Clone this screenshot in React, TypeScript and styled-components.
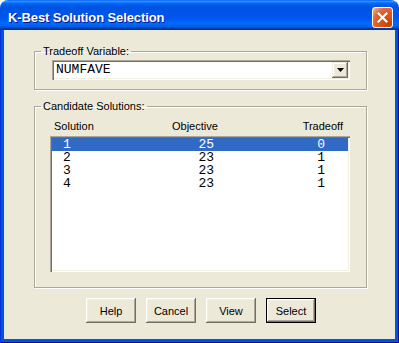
import React from 'react';
import styled, { createGlobalStyle } from 'styled-components';

const GlobalStyle = createGlobalStyle`
  html, body {
    margin: 0;
    padding: 0;
    background: #ffffff;
  }
  body {
    font-family: 'Liberation Sans', Arial, sans-serif;
    font-size: 11px;
  }
`;

const Window = styled.div`
  width: 399px;
  height: 343px;
  display: flex;
  flex-direction: column;
`;

const TitleBar = styled.div`
  height: 30px;
  box-sizing: border-box;
  padding: 5px 6px 0 8px;
  display: flex;
  align-items: center;
  justify-content: space-between;
  border-radius: 8px 8px 0 0;
  background: linear-gradient(
    180deg,
    #0058ee 0%,
    #3593ff 4%,
    #288eff 6%,
    #127dff 8%,
    #036ffc 10%,
    #0262ee 14%,
    #0057e5 20%,
    #0054e3 24%,
    #0055eb 56%,
    #005bf5 66%,
    #026afe 76%,
    #0062ef 86%,
    #0052d6 92%,
    #0040ab 94%,
    #003092 100%
  );
`;

const Title = styled.span`
  color: #ffffff;
  font-family: 'Liberation Sans', Arial, sans-serif;
  font-weight: bold;
  font-size: 13px;
  letter-spacing: -0.1px;
  text-shadow: 1px 1px 0 #0a1883;
`;

const CloseButton = styled.div`
  width: 21px;
  height: 21px;
  box-sizing: border-box;
  border: 1px solid #ffffff;
  border-radius: 3px;
  display: flex;
  align-items: center;
  justify-content: center;
  background: radial-gradient(
    circle at 85% 85%,
    #c94100 0%,
    #dc5a1f 50%,
    #e2693a 70%,
    #f0a17c 90%,
    #ffd6c0 100%
  );
`;

const Frame = styled.div`
  flex: 1;
  display: flex;
  padding: 0 4px 4px;
  background: #0054e3;
  box-shadow: inset 1px 0 #0831d9, inset -1px -1px #00138c;
`;

const Client = styled.div`
  flex: 1;
  background: #ece9d8;
  padding: 14px 28px 0 30px;
  display: flex;
  flex-direction: column;
`;

const Group = styled.fieldset<{ gapTop?: number }>`
  margin: ${p => p.gapTop ?? 0}px 0 0 0;
  padding: 0;
  min-width: 0;
  border: 1px solid #aca899;
  box-shadow: 1px 1px 0 #ffffff, inset 1px 1px 0 #ffffff;
`;

const Legend = styled.legend`
  margin-left: 6px;
  padding: 0 2px;
  line-height: 14px;
  font-size: 11px;
  color: #000000;
`;

const GroupBody = styled.div<{ pad: string }>`
  padding: ${p => p.pad};
`;

const Combo = styled.div`
  height: 20px;
  box-sizing: border-box;
  display: flex;
  background: #ffffff;
  box-shadow: inset 1px 1px #aca899, inset 2px 2px #716f64, inset -1px -1px #ffffff,
    inset -2px -2px #f1efe2;
  padding: 2px;
`;

const ComboText = styled.div`
  flex: 1;
  padding-left: 2px;
  font-family: 'Liberation Mono', 'Courier New', monospace;
  font-size: 13px;
  line-height: 16px;
  color: #000000;
`;

const ArrowButton = styled.div`
  width: 16px;
  height: 16px;
  box-sizing: border-box;
  background: #ece9d8;
  box-shadow: inset -1px -1px #716f64, inset 1px 1px #f1efe2, inset -2px -2px #aca899,
    inset 2px 2px #ffffff;
  display: flex;
  align-items: center;
  justify-content: center;
`;

const HeaderRow = styled.div`
  margin-top: 6px;
  display: grid;
  grid-template-columns: 118px 1fr auto;
  padding: 0 7px 0 4px;
  line-height: 14px;
  color: #000000;
`;

const ListBox = styled.div`
  margin-top: 3px;
  height: 136px;
  box-sizing: border-box;
  padding: 2px;
  background: #ffffff;
  box-shadow: inset 1px 1px #aca899, inset 2px 2px #716f64, inset -1px -1px #ffffff,
    inset -2px -2px #f1efe2;
`;

const Row = styled.div<{ selected?: boolean }>`
  display: grid;
  grid-template-columns: 96px 66px 111px;
  height: 13px;
  line-height: 13px;
  font-family: 'Liberation Mono', 'Courier New', monospace;
  font-size: 13px;
  color: ${p => (p.selected ? '#ffffff' : '#000000')};
  background: ${p => (p.selected ? '#316ac5' : 'transparent')};
`;

const Cell = styled.span<{ align: 'left' | 'right'; indent?: number }>`
  text-align: ${p => p.align};
  padding-left: ${p => p.indent ?? 0}px;
`;

const ButtonRow = styled.div`
  margin-top: 10px;
  display: flex;
  justify-content: center;
  gap: 10px;
  padding-left: 1px;
`;

const Button = styled.div<{ isDefault?: boolean }>`
  width: 50px;
  height: 25px;
  box-sizing: border-box;
  display: flex;
  align-items: center;
  justify-content: center;
  background: #ece9d8;
  color: #000000;
  font-size: 11px;
  border: ${p => (p.isDefault ? '1px solid #000000' : 'none')};
  box-shadow: inset -1px -1px #716f64, inset 1px 1px #ffffff, inset -2px -2px #aca899,
    inset 2px 2px #f1efe2;
`;

const rows = [
  { id: 1, objective: 25, tradeoff: 0 },
  { id: 2, objective: 23, tradeoff: 1 },
  { id: 3, objective: 23, tradeoff: 1 },
  { id: 4, objective: 23, tradeoff: 1 },
];

const App: React.FC = () => {
  return (
    <>
      <GlobalStyle />
      <Window>
        <TitleBar>
          <Title>K-Best Solution Selection</Title>
          <CloseButton>
            <svg width="11" height="11" viewBox="0 0 11 11">
              <path d="M1.5 1.5 L9.5 9.5 M9.5 1.5 L1.5 9.5" stroke="#ffffff" strokeWidth="2" strokeLinecap="square" />
            </svg>
          </CloseButton>
        </TitleBar>
        <Frame>
          <Client>
            <Group>
              <Legend>Tradeoff Variable:</Legend>
              <GroupBody pad="2px 16px 9px 17px">
                <Combo>
                  <ComboText>NUMFAVE</ComboText>
                  <ArrowButton>
                    <svg width="7" height="4" viewBox="0 0 7 4">
                      <path d="M0 0 H7 L3.5 4 Z" fill="#000000" />
                    </svg>
                  </ArrowButton>
                </Combo>
              </GroupBody>
            </Group>

            <Group gapTop={9}>
              <Legend>Candidate Solutions:</Legend>
              <GroupBody pad="0 16px 15px 15px">
                <HeaderRow>
                  <span>Solution</span>
                  <span>Objective</span>
                  <span>Tradeoff</span>
                </HeaderRow>
                <ListBox>
                  {rows.map(r => (
                    <Row key={r.id} selected={r.id === 1}>
                      <Cell align="left" indent={11}>
                        {r.id}
                      </Cell>
                      <Cell align="right">{r.objective}</Cell>
                      <Cell align="right">{r.tradeoff}</Cell>
                    </Row>
                  ))}
                </ListBox>
              </GroupBody>
            </Group>

            <ButtonRow>
              <Button>Help</Button>
              <Button>Cancel</Button>
              <Button>View</Button>
              <Button isDefault>Select</Button>
            </ButtonRow>
          </Client>
        </Frame>
      </Window>
    </>
  );
};

export default App;
